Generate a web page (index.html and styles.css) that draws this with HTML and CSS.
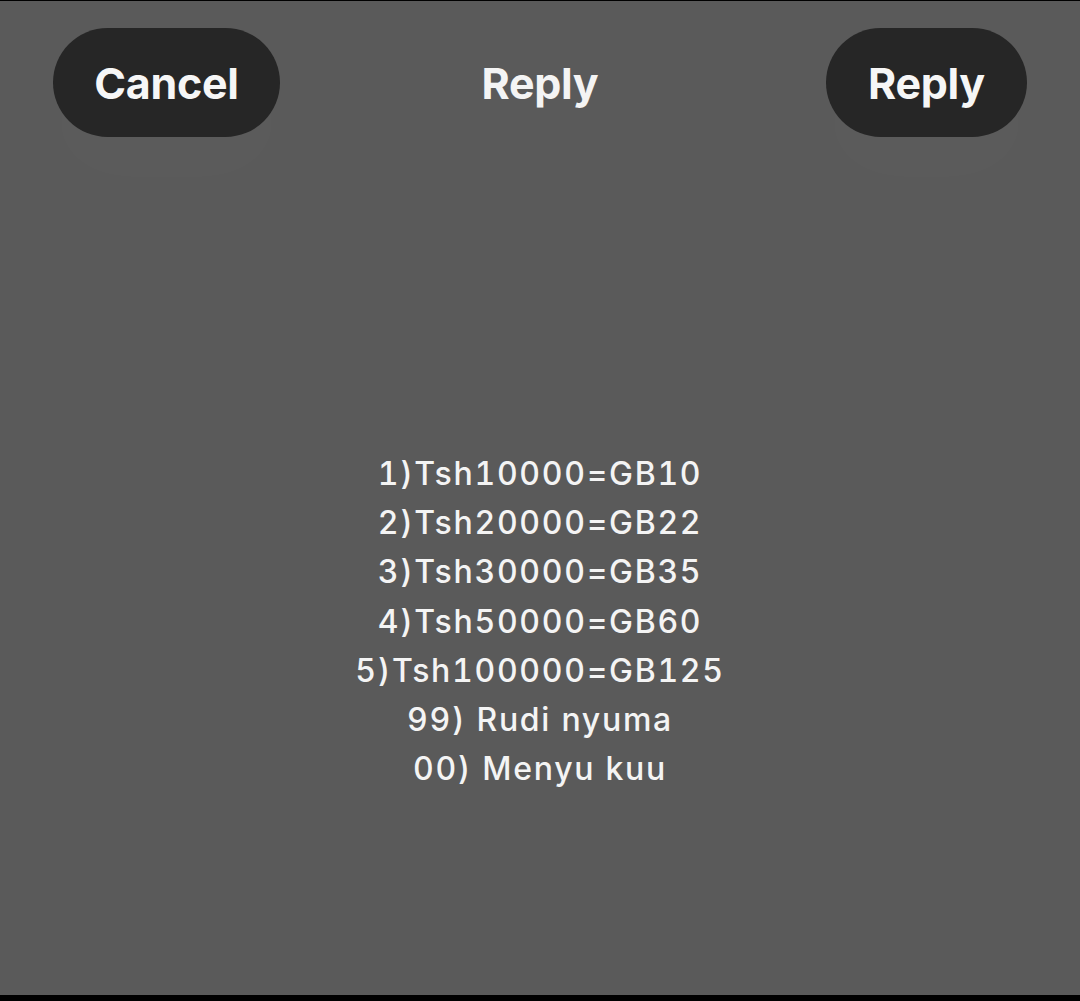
FILE: index.html
```html
<!DOCTYPE html>
<html lang="sw">
<head>
    <meta charset="UTF-8">
    <title>Reply</title>
    <link rel="stylesheet" href="styles.css">
</head>
<body>
    <div class="screen">
        <header class="top-bar">
            <button class="pill pill-left">Cancel</button>
            <h1 class="title">Reply</h1>
            <button class="pill pill-right">Reply</button>
        </header>

        <main class="message">
            <p>1)Tsh10000=GB10</p>
            <p>2)Tsh20000=GB22</p>
            <p>3)Tsh30000=GB35</p>
            <p>4)Tsh50000=GB60</p>
            <p>5)Tsh100000=GB125</p>
            <p>99) Rudi nyuma</p>
            <p>00) Menyu kuu</p>
        </main>

        <div class="bottom-edge"></div>
    </div>
</body>
</html>
```

FILE: styles.css
```css
html, body {
    margin: 0;
    padding: 0;
    background: #000;
}
.screen {
    display: flex;
    flex-direction: column;
    height: 1000px;
    margin-top: 1px;
    background: #5a5a5a;
    font-family: Inter, "Liberation Sans", sans-serif;
    color: #f4f4f4;
}

/* top bar: two pills with the title in the middle */
.top-bar {
    display: grid;
    grid-template-columns: 1fr auto 1fr;
    align-items: center;
    padding: 27px 53px 0 53px;
}
.pill {
    height: 109px;
    border: none;
    border-radius: 55px;
    background: #262626;
    color: #f6f6f6;
    font-family: inherit;
    font-size: 43px;
    font-weight: 700;
    letter-spacing: -0.3px;
    box-shadow: 0 40px 60px rgba(255, 255, 255, 0.015);
}
.pill-left {
    justify-self: start;
    width: 227px;
}
.pill-right {
    justify-self: end;
    width: 201px;
}
.title {
    margin: 0;
    font-size: 43px;
    font-weight: 700;
    letter-spacing: -0.3px;
}

.message {
    padding-top: 312px;
    text-align: center;
    font-size: 32px;
    font-weight: 500;
    line-height: 49.2px;
    letter-spacing: 1.7px;
    font-variant-numeric: tabular-nums;
}
.message p {
    margin: 0;
}

.bottom-edge {
    margin-top: auto;
    height: 6px;
    background: #000;
}
```
